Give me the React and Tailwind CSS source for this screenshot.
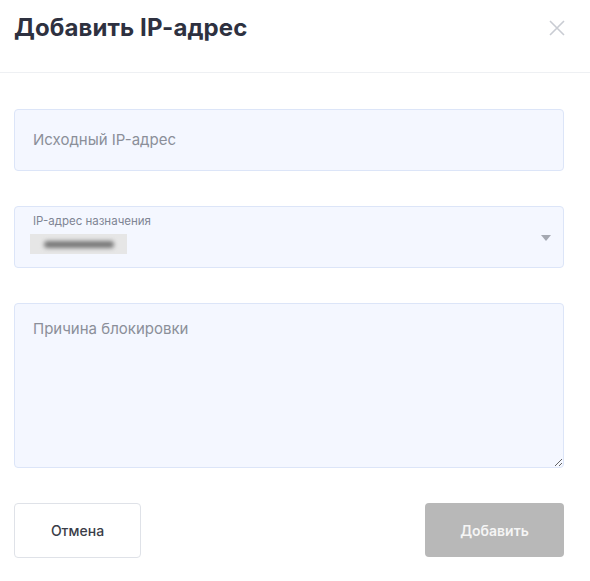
import React from 'react';

const App = () => {
  return (
    <div className="w-[590px] h-[581px] bg-white font-['Inter',sans-serif] text-[#2e3140]">
      <div className="h-[73px] flex items-start justify-between pl-[14px] pr-[24px] pt-[13px] border-b border-[#eef0f3]">
        <h2 className="text-[24px] font-bold tracking-[0.1px] leading-[30px]">Добавить IP-адрес</h2>
        <button className="mt-[6px] text-[#c9ccd3]" aria-label="close">
          <svg width="18" height="18" viewBox="0 0 18 18" fill="none" stroke="currentColor" strokeWidth="1.6">
            <path d="M2 2l14 14M16 2L2 16" />
          </svg>
        </button>
      </div>

      <div className="pl-[14px] pr-[26px] pt-[36px]">
        <div className="h-[62px] rounded-[4px] border border-[#dce5f8] bg-[#f4f7ff] flex items-center px-[18px]">
          <span className="text-[15px] text-[#8b8f99]">Исходный IP-адрес</span>
        </div>

        <div className="mt-[35px] h-[62px] rounded-[4px] border border-[#dce5f8] bg-[#f4f7ff] flex items-start justify-between pl-[18px] pr-[12px]">
          <div className="flex flex-col pt-[6px]">
            <span className="text-[11.5px] leading-[16px] text-[#7f8594]">IP-адрес назначения</span>
            <div className="mt-[5px] -ml-[3px] w-[97px] h-[20px] bg-[#e6e6e6] flex items-center justify-center">
              <div className="w-[70px] h-[7px] rounded-full bg-[#777] blur-[2px]" />
            </div>
          </div>
          <svg width="10" height="8" viewBox="0 0 10 8" className="mt-[27px]">
            <path d="M0 1h10L5 7z" fill="#a5a9b2" />
          </svg>
        </div>

        <textarea
          className="mt-[35px] block w-full h-[165px] rounded-[4px] border border-[#dce5f8] bg-[#f4f7ff] px-[18px] py-[14px] text-[15px] placeholder-[#8b8f99] outline-none"
          placeholder="Причина блокировки"
        />

        <div className="mt-[35px] flex justify-between">
          <button className="w-[127px] h-[55px] rounded-[4px] border border-[#dfe2e8] bg-white text-[14px] font-medium text-[#3a3d48]">
            Отмена
          </button>
          <button className="w-[139px] h-[54px] rounded-[4px] bg-[#b8b8b8] text-[14px] font-semibold text-[#f5f5f5]">
            Добавить
          </button>
        </div>
      </div>
    </div>
  );
};

export default App;
